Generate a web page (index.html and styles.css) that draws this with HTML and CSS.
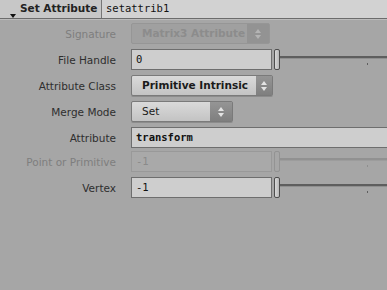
FILE: index.html
```html
<!DOCTYPE html>
<html lang="en">
<head>
    <meta charset="UTF-8">
    <title>Set Attribute</title>
    <link rel="stylesheet" href="styles.css">
</head>
<body>
    <div class="header">
        <div class="node-type">
            <span class="collapse-arrow"></span>
            Set Attribute
        </div>
        <div class="node-name">setattrib1</div>
    </div>

    <div class="parms">
        <div class="row disabled">
            <div class="label">Signature</div>
            <div class="menu bold menu-signature">
                <span class="menu-text">Matrix3 Attribute</span>
                <span class="menu-arrow"></span>
            </div>
        </div>

        <div class="row">
            <div class="label">File Handle</div>
            <div class="field field-num">0</div>
            <div class="slider">
                <span class="slider-handle"></span>
                <span class="slider-track"></span>
            </div>
        </div>

        <div class="row">
            <div class="label">Attribute Class</div>
            <div class="menu bold menu-class">
                <span class="menu-text">Primitive Intrinsic</span>
                <span class="menu-arrow"></span>
            </div>
        </div>

        <div class="row">
            <div class="label">Merge Mode</div>
            <div class="menu menu-merge">
                <span class="menu-text">Set</span>
                <span class="menu-arrow"></span>
            </div>
        </div>

        <div class="row row-attrib">
            <div class="label">Attribute</div>
            <div class="field field-wide mono-bold">transform</div>
        </div>

        <div class="row disabled">
            <div class="label">Point or Primitive</div>
            <div class="field field-num">-1</div>
            <div class="slider">
                <span class="slider-handle"></span>
                <span class="slider-track"></span>
            </div>
        </div>

        <div class="row">
            <div class="label">Vertex</div>
            <div class="field field-num">-1</div>
            <div class="slider">
                <span class="slider-handle"></span>
                <span class="slider-track"></span>
            </div>
        </div>
    </div>
</body>
</html>
```
FILE: styles.css
```css
* {
    margin: 0;
    padding: 0;
    box-sizing: border-box;
}

body {
    background-color: #a6a6a6;
    font-family: "DejaVu Sans", sans-serif;
    font-size: 10.5px;
    color: #2b2b2b;
    width: 387px;
    height: 290px;
    overflow: hidden;
}

/* header with node type and name */
.header {
    display: flex;
    height: 19px;
    background-color: #c7c7c7;
    border-bottom: 1px solid #6c6c6c;
    box-shadow: 0 1px 0 #bcbcbc;
}

.node-type {
    position: relative;
    width: 101px;
    padding-left: 20px;
    padding-top: 2px;
    font-weight: bold;
    font-size: 10.5px;
    color: #222;
}

.collapse-arrow {
    position: absolute;
    left: 10px;
    top: 14px;
    width: 0;
    height: 0;
    border-left: 3.5px solid transparent;
    border-right: 3.5px solid transparent;
    border-top: 4px solid #111;
}

.node-name {
    flex: 1;
    background-color: #d2d2d2;
    border-left: 1px solid #777;
    padding: 2px 0 0 4px;
    font-family: "DejaVu Sans Mono", monospace;
    color: #111;
}

/* parameter rows */
.parms {
    padding-top: 4px;
}

.row {
    display: flex;
    align-items: center;
    height: 21px;
    margin-bottom: 5px;
}

.row-attrib {
    margin-top: 1px;
    margin-bottom: 3px;
}

.label {
    width: 131px;
    padding-right: 15px;
    text-align: right;
    color: #2e2e2e;
}

.disabled .label {
    color: #7e7e7e;
}

.field {
    height: 21px;
    background-color: #cecece;
    border: 1px solid #6e6e6e;
    padding: 3px 0 0 4px;
    font-family: "DejaVu Sans Mono", monospace;
    color: #111;
}

.field-num {
    width: 141px;
}

.field-wide {
    flex: 1;
    border-right: none;
}

.mono-bold {
    font-weight: bold;
}

.disabled .field {
    background-color: #a9a9a9;
    border-color: #999;
    color: #8a8a8a;
}

/* menus */
.menu {
    display: flex;
    height: 21px;
    border: 1px solid #7a7a7a;
    border-radius: 2px;
    background: linear-gradient(#dadada, #c3c3c3);
    box-shadow: 0 1px 0 #8c8c8c;
    color: #1a1a1a;
}

.menu.bold {
    font-weight: bold;
}

.menu-text {
    flex: 1;
    padding: 3px 0 0 10px;
}

.menu-arrow {
    position: relative;
    width: 22px;
    background: linear-gradient(#959595, #7f7f7f);
}

.menu-arrow::before,
.menu-arrow::after {
    content: "";
    position: absolute;
    left: 8px;
    width: 0;
    height: 0;
    border-left: 3px solid transparent;
    border-right: 3px solid transparent;
}

.menu-arrow::before {
    top: 5px;
    border-bottom: 4px solid #e4e4e4;
}

.menu-arrow::after {
    top: 11px;
    border-top: 4px solid #e4e4e4;
}

.menu-signature {
    width: 139px;
}

.menu-class {
    width: 142px;
}

.menu-class .menu-arrow {
    width: 16px;
}

.menu-class .menu-arrow::before,
.menu-class .menu-arrow::after {
    left: 5px;
}

.menu-merge {
    width: 102px;
}

.disabled .menu {
    background: #a0a0a0;
    border-color: #969696;
    box-shadow: none;
    color: #8c8c8c;
}

.disabled .menu-arrow {
    background: #939393;
}

.disabled .menu-arrow::before {
    border-bottom-color: #b4b4b4;
}

.disabled .menu-arrow::after {
    border-top-color: #b4b4b4;
}

/* sliders */
.slider {
    flex: 1;
    display: flex;
    align-items: center;
    height: 21px;
    margin-left: 2px;
}

.slider-handle {
    width: 6px;
    height: 21px;
    background: linear-gradient(90deg, #d8d8d8, #b8b8b8);
    border: 1px solid #4e4e4e;
    border-radius: 2px;
}

.slider-track {
    position: relative;
    flex: 1;
    height: 3px;
    margin-top: -4px;
    background-color: #5e5e5e;
    border-bottom: 1px solid #8f8f8f;
}

.slider-track::after {
    content: "";
    position: absolute;
    left: 87px;
    top: 7px;
    width: 1px;
    height: 2px;
    background-color: #5e5e5e;
}

.disabled .slider-handle {
    background: #a6a6a6;
    border-color: #939393;
}

.disabled .slider-track {
    background-color: #919191;
    border-bottom-color: #9c9c9c;
}

.disabled .slider-track::after {
    background-color: #8e8e8e;
}
```
